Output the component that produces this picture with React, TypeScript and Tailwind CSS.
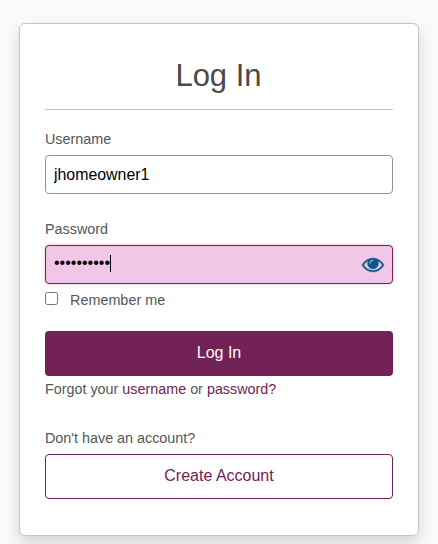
import type { ReactNode } from "react";

interface FieldLabelProps {
	htmlFor: string;
	children: ReactNode;
}

function FieldLabel({ htmlFor, children }: FieldLabelProps) {
	return (
		<label htmlFor={htmlFor} className="block h-[21px] text-[14.35px] leading-[21px]">
			{children}
		</label>
	);
}

function EyeIcon() {
	return (
		<svg
			viewBox="0 384 1792 1152"
			className="h-[14px] w-[22px] overflow-visible text-[#0b5688]"
			fill="currentColor"
			stroke="currentColor"
			strokeWidth="30"
			aria-hidden="true"
		>
			<path d="M1664 960q-152-236-381-353 61 104 61 225 0 185-131.5 316.5t-316.5 131.5-316.5-131.5-131.5-316.5q0-121 61-225-229 117-381 353 133 205 333.5 326.5t434.5 121.5 434.5-121.5 333.5-326.5zm-720-384q0-20-14-34t-34-14q-125 0-214.5 89.5t-89.5 214.5q0 20 14 34t34 14 34-14 14-34q0-86 61-147t147-61q20 0 34-14t14-34zm848 384q0 34-20 69-140 230-376.5 368.5t-499.5 138.5-499.5-139-376.5-368q-20-35-20-69t20-69q140-229 376.5-368t499.5-139 499.5 139 376.5 368q20 35 20 69z" />
		</svg>
	);
}

export default function App() {
	return (
		<div className="h-[544px] w-[438px] overflow-hidden bg-[#fafafa] pt-[23px] pl-[19px] font-['Liberation_Sans',Arial,sans-serif] text-[#525759]">
			<main className="h-[513px] w-[400px] rounded-[6px] border border-[#c4c4c4] bg-white px-[25px] pt-[32px] shadow-[0_8px_16px_rgba(0,0,0,0.15)]">
				<h1 className="h-[54px] border-b border-[#c4c4c4] pr-px text-center text-[31px] leading-[40px] text-[#4a4a4a]">
					Log In
				</h1>

				<form onSubmit={(e) => e.preventDefault()}>
					<div className="pt-[19px]">
						<FieldLabel htmlFor="username">Username</FieldLabel>
						<input
							id="username"
							type="text"
							defaultValue="jhomeowner1"
							className="mt-[5px] block h-[39px] w-full rounded-[4px] border border-[#939598] bg-white px-2 text-[15.9px] text-black outline-none"
						/>
					</div>

					<div className="pt-[25px]">
						<FieldLabel htmlFor="password">Password</FieldLabel>
						<div
							id="password"
							className="mt-[5px] flex h-[39px] items-center rounded-[4px] border border-[#732257] bg-[#f0c7e7] pr-[8px] pl-2 text-base text-black shadow-[0_0_4px_rgba(115,34,87,0.25)]"
						>
							<span className="-mt-[3px]">••••••••••</span>
							<span className="-mt-[2px] h-[17px] w-px bg-black" />
							<button type="button" aria-label="Show password" className="ml-auto">
								<EyeIcon />
							</button>
						</div>
					</div>

					<label className="mt-[6px] flex h-[22px] items-center text-[14.4px]">
						<input
							type="checkbox"
							className="-mt-[5px] mr-[12px] h-[13px] w-[13px] appearance-none rounded-[2.5px] border border-[#767676] bg-white"
						/>
						Remember me
					</label>

					<button
						type="submit"
						className="mt-[19px] block h-[45px] w-full rounded-[4px] bg-[#732257] pb-[2px] text-base text-white"
					>
						Log In
					</button>
				</form>

				<p className="mt-[3px] text-[14.35px] leading-[21px]">
					Forgot your{" "}
					<a href="#username" className="text-[#732257]">
						username
					</a>{" "}
					or{" "}
					<a href="#password" className="text-[#732257]">
						password?
					</a>
				</p>

				<p className="mt-[28px] text-[14.35px] leading-[21px]">Don't have an account?</p>
				<button
					type="button"
					className="mt-[5px] block h-[45px] w-full rounded-[4px] border border-[#732257] bg-white pb-[2px] text-base text-[#732257]"
				>
					Create Account
				</button>
			</main>
		</div>
	);
}
